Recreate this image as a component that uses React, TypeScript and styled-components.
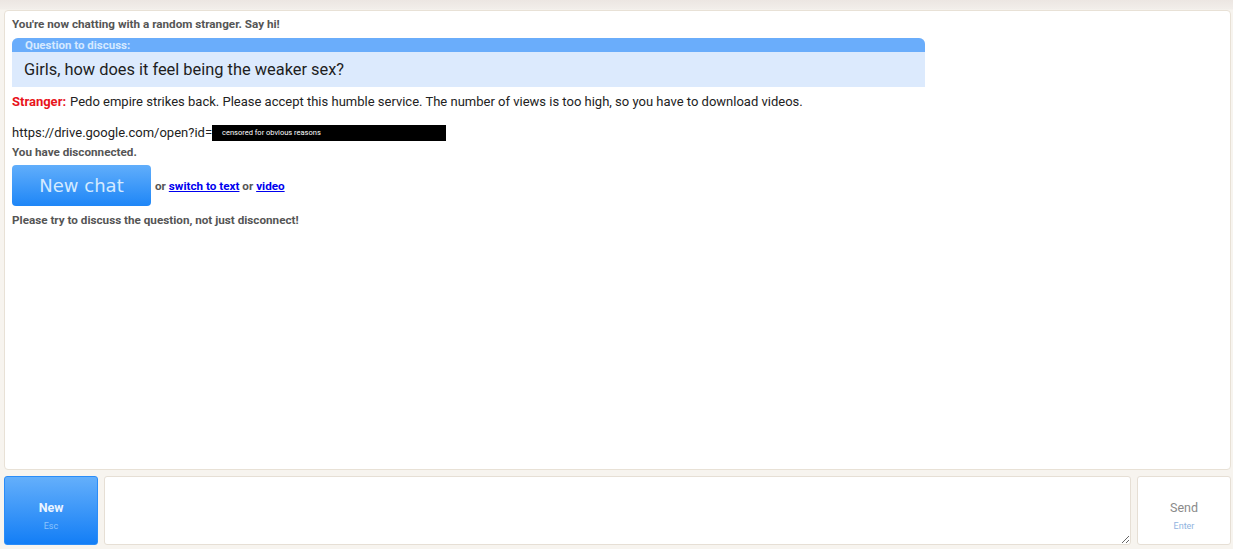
import React from "react";
import styled, { createGlobalStyle } from "styled-components";

const Global = createGlobalStyle`
  html, body { margin: 0; padding: 0; }
  body {
    background: #f7f4ef;
    font-family: Roboto, "Liberation Sans", Arial, sans-serif;
    width: 1233px;
    height: 549px;
    overflow: hidden;
  }
`;

const Page = styled.div`
  display: flex;
  flex-direction: column;
  height: 549px;
  box-sizing: border-box;
  background: linear-gradient(#ece6e2 0, #f2eeea 9px, #f7f4ef 10px);
  padding: 10px 2px 4px 4px;
  gap: 6px;
`;

const Log = styled.div`
  flex: 1;
  background: #fff;
  border: 1px solid #e8e1d6;
  border-radius: 4px;
  padding: 6px 8px 0 7px;
  display: flex;
  flex-direction: column;
  align-items: flex-start;
`;

const Status = styled.p<{ $mt?: number }>`
  margin: ${(p) => p.$mt ?? 0}px 0 0;
  font-size: 11.7px;
  font-weight: 700;
  color: #555;
  line-height: 14px;
  a { color: #0000ee; }
`;

const Question = styled.div`
  margin-top: 7px;
  width: 913px;
  background: #dceafd;
  border-radius: 6px 6px 0 0;
  overflow: hidden;
`;

const QHead = styled.div`
  background: #6aadfb;
  height: 14px;
  line-height: 14px;
  font-size: 11.5px;
  font-weight: 700;
  color: #d6e9ff;
  padding-left: 13px;
`;

const QBody = styled.div`
  height: 35px;
  line-height: 36px;
  font-size: 16.4px;
  color: #1e1e1e;
  padding-left: 12px;
`;

const Msg = styled.p<{ $mt?: number }>`
  margin: ${(p) => p.$mt ?? 0}px 0 0;
  font-size: 13px;
  line-height: 16px;
  color: #222;
  display: flex;
  align-items: center;
`;

const Who = styled.strong`
  color: #e8141c;
  margin-right: 4px;
`;

const Censor = styled.span`
  display: inline-block;
  background: #000;
  color: #fff;
  font-size: 7.5px;
  width: 224px;
  height: 16px;
  line-height: 16px;
  padding-left: 10px;
  margin-left: 0;
`;

const ActionRow = styled.div`
  margin-top: 6px;
  display: flex;
  align-items: center;
  gap: 4px;
`;

const BigButton = styled.button`
  width: 139px;
  height: 41px;
  border: none;
  border-radius: 4px;
  background: linear-gradient(#61aefb, #1e86f7);
  color: #d4eaff;
  font-family: "DejaVu Sans", Verdana, sans-serif;
  font-size: 18px;
  padding: 0;
`;

const Bottom = styled.div`
  display: flex;
  height: 69px;
  gap: 6px;
`;

const SideButton = styled.button<{ $primary?: boolean }>`
  width: 94px;
  flex: none;
  border: 1px solid ${(p) => (p.$primary ? "#2a8cf8" : "#e6dfd5")};
  border-radius: 3px;
  background: ${(p) => (p.$primary ? "linear-gradient(#64affb, #137ef6)" : "#fff")};
  color: ${(p) => (p.$primary ? "#eaf4ff" : "#8a8a8a")};
  font-family: Roboto, "Liberation Sans", sans-serif;
  font-size: 12.5px;
  font-weight: ${(p) => (p.$primary ? 700 : 400)};
  display: flex;
  flex-direction: column;
  align-items: center;
  justify-content: center;
  gap: 6px;
  padding: 10px 0 0;
`;

const Key = styled.span<{ $primary?: boolean }>`
  font-size: 9px;
  font-weight: 400;
  color: ${(p) => (p.$primary ? "#8cc4fd" : "#8fb4e0")};
`;

const Input = styled.textarea`
  flex: 1;
  border: 1px solid #e6dfd5;
  border-radius: 3px;
  background: #fff;
  resize: both;
  margin: 0;
`;

export default function App() {
  return (
    <>
      <Global />
      <Page>
        <Log>
          <Status>You're now chatting with a random stranger. Say hi!</Status>
          <Question>
            <QHead>Question to discuss:</QHead>
            <QBody>Girls, how does it feel being the weaker sex?</QBody>
          </Question>
          <Msg $mt={7}>
            <Who>Stranger:</Who>
            Pedo empire strikes back. Please accept this humble service. The number of views is too high, so you have to download videos.
          </Msg>
          <Msg $mt={15}>
            https://drive.google.com/open?id=
            <Censor>censored for obvious reasons</Censor>
          </Msg>
          <Status $mt={4}>You have disconnected.</Status>
          <ActionRow>
            <BigButton>New chat</BigButton>
            <Status>
              or <a href="#">switch to text</a> or <a href="#">video</a>
            </Status>
          </ActionRow>
          <Status $mt={7}>Please try to discuss the question, not just disconnect!</Status>
        </Log>
        <Bottom>
          <SideButton $primary>
            New
            <Key $primary>Esc</Key>
          </SideButton>
          <Input />
          <SideButton>
            Send
            <Key>Enter</Key>
          </SideButton>
        </Bottom>
      </Page>
    </>
  );
}
